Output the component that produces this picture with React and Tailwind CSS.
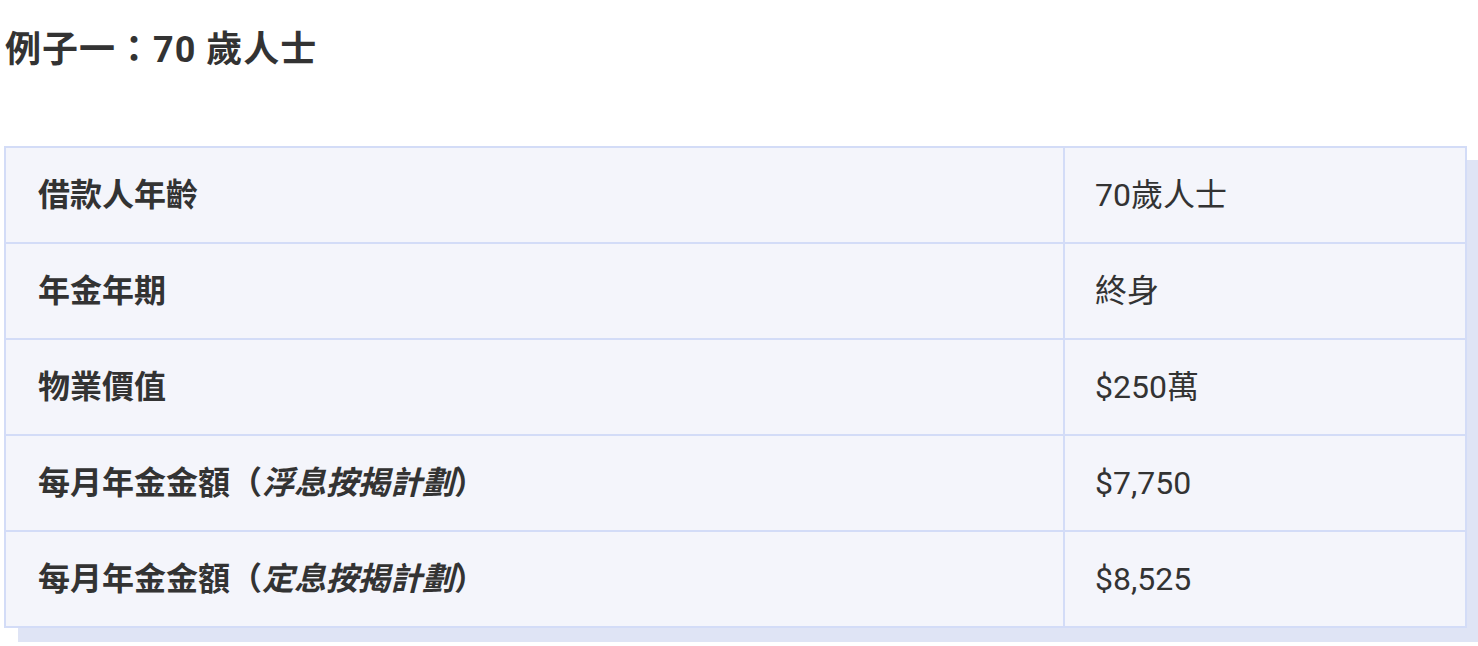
const rows = [
  { label: "借款人年齡", value: "70歲人士" },
  { label: "年金年期", value: "終身" },
  { label: "物業價值", value: "$250萬" },
  { label: "每月年金金額（", italic: "浮息按揭計劃", tail: "）", value: "$7,750" },
  { label: "每月年金金額（", italic: "定息按揭計劃", tail: "）", value: "$8,525" },
];

const App = () => {
  return (
    <div
      className="min-h-screen bg-white text-[#333333]"
      style={{ fontFamily: 'Roboto, "Noto Sans CJK TC", sans-serif' }}
    >
      <h2 className="pl-[5px] pt-[25px] text-[36px] leading-[50px] font-bold tracking-[1px]">例子一：70 歲人士</h2>

      <div className="mt-[71px] ml-[4px] w-[1463px] shadow-[14px_14px_0_0_#dfe4f5]">
        <table className="w-full border-collapse bg-[#f4f5fb]">
          <tbody>
            {rows.map((r, i) => (
              <tr key={i} className="h-[96px]">
                <td className="w-[1059px] border-2 border-[#d3dcf7] pl-[32px] text-[32px] font-bold">
                  {r.label}
                  {r.italic && <em>{r.italic}</em>}
                  {r.tail}
                </td>
                <td className="border-2 border-[#d3dcf7] pl-[30px] text-[32px]">{r.value}</td>
              </tr>
            ))}
          </tbody>
        </table>
      </div>
    </div>
  );
};

export default App;
